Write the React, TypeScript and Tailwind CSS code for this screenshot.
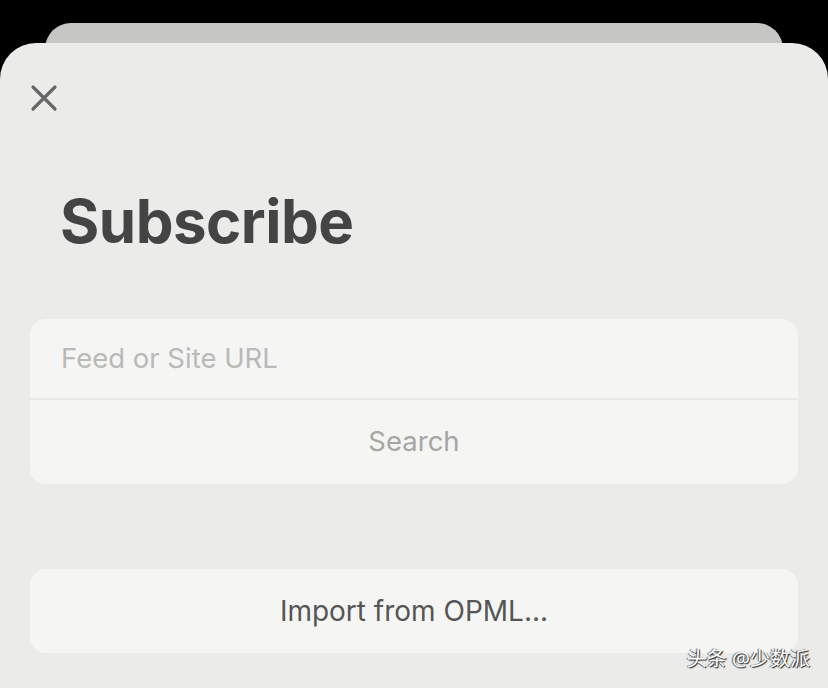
import React from 'react';

const font = { fontFamily: 'Inter, "Noto Sans", sans-serif' };

const CloseIcon: React.FC = () => (
  <svg width="28" height="28" viewBox="0 0 28 28" fill="none">
    <path d="M3 3L25 25M25 3L3 25" stroke="#666666" strokeWidth="3.2" strokeLinecap="round" />
  </svg>
);

const App: React.FC = () => {
  return (
    <div className="relative w-[828px] h-[688px] bg-black overflow-hidden" style={font}>
      {/* stacked sheet behind */}
      <div className="absolute left-[45px] right-[45px] top-[23px] h-[60px] rounded-t-[26px] bg-[#c6c6c4]" />

      {/* front sheet */}
      <div className="absolute left-0 right-0 top-[43px] bottom-0 rounded-t-[36px] bg-[#ebebea] flex flex-col">
        <button className="ml-[30px] mt-[41px] w-[28px] h-[28px] flex items-center justify-center">
          <CloseIcon />
        </button>

        <h1 className="ml-[60px] mt-[73px] text-[60px] leading-[72px] font-bold tracking-[-0.5px] text-[#444444]">
          Subscribe
        </h1>

        <div className="mx-[30px] mt-[62px] rounded-[16px] bg-[#f5f5f4] flex flex-col">
          <div className="h-[81px] flex items-center px-[31px] border-b-2 border-[#e9e9e8]">
            <span className="text-[27.5px] text-[#b9b9b8]">Feed or Site URL</span>
          </div>
          <div className="h-[84px] flex items-center justify-center">
            <span className="text-[27.5px] text-[#a6a6a5]">Search</span>
          </div>
        </div>

        <div className="mx-[30px] mt-[85px] h-[84px] rounded-[16px] bg-[#f5f5f4] flex items-center justify-center">
          <span className="text-[28px] text-[#555555]">Import from OPML...</span>
        </div>
      </div>

      <div
        className="absolute right-[18px] bottom-[17px] text-[20px] leading-[24px] text-white"
        style={{ fontFamily: '"Noto Sans", "Noto Sans CJK SC", sans-serif', textShadow: '1px 1px 1px #222, -1px 0 1px #555' }}
      >
        头条 @少数派
      </div>
    </div>
  );
};

export default App;
